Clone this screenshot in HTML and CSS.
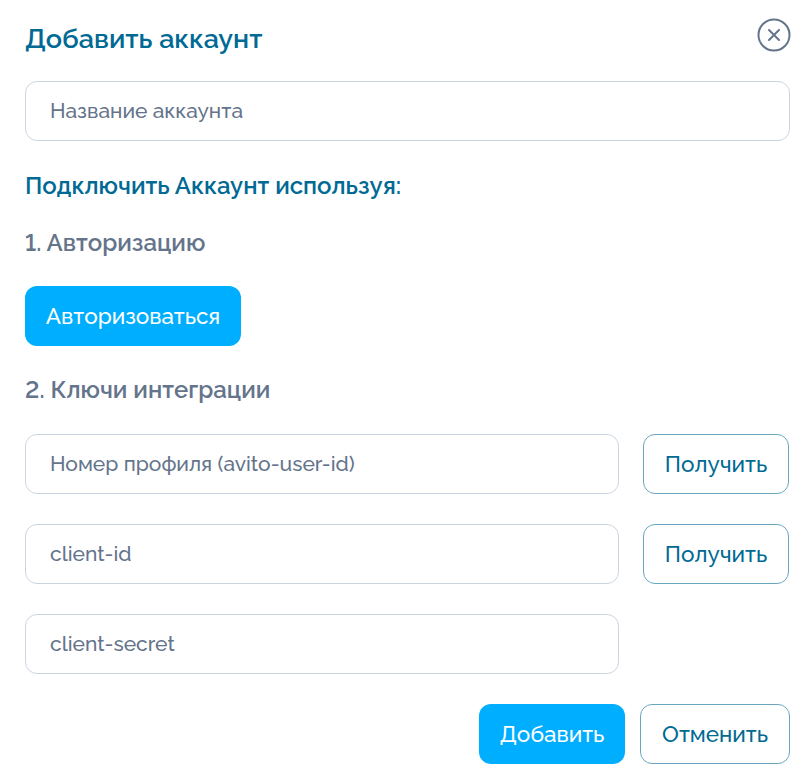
FILE: index.html
```html
<!DOCTYPE html>
<html lang="ru">
<head>
    <meta charset="UTF-8">
    <meta name="viewport" content="width=device-width, initial-scale=1.0">
    <title>Добавить аккаунт</title>
    <link rel="stylesheet" href="styles.css">
</head>
<body>
    <div class="modal">
        <div class="modal-head">
            <h1>Добавить аккаунт</h1>
            <button class="close" aria-label="Закрыть">
                <svg width="34" height="34" viewBox="0 0 34 34" fill="none" stroke="#64748b">
                    <circle cx="17" cy="17" r="15.5" stroke-width="2"/>
                    <path d="M12 12l10 10M22 12l-10 10" stroke-width="2" stroke-linecap="round"/>
                </svg>
            </button>
        </div>
        <input class="field" type="text" placeholder="Название аккаунта">
        <h2>Подключить Аккаунт используя:</h2>
        <h3>1. Авторизацию</h3>
        <div><button class="btn primary wide">Авторизоваться</button></div>
        <h3 class="keys">2. Ключи интеграции</h3>
        <div class="row">
            <input class="field" type="text" placeholder="Номер профиля (avito-user-id)">
            <button class="btn outline">Получить</button>
        </div>
        <div class="row">
            <input class="field" type="text" placeholder="client-id">
            <button class="btn outline">Получить</button>
        </div>
        <div class="row">
            <input class="field" type="text" placeholder="client-secret">
            <div class="spacer"></div>
        </div>
        <div class="actions">
            <button class="btn primary">Добавить</button>
            <button class="btn outline">Отменить</button>
        </div>
    </div>
</body>
</html>
```

FILE: styles.css
```css
body {
    margin: 0;
    background: #fff;
    font-family: Raleway, "Open Sans", "Noto Sans", sans-serif;
    font-variant-numeric: lining-nums;
}
.modal {
    width: 765px;
    padding: 18px 21px 18px 25px;
    display: flex;
    flex-direction: column;
}
.modal-head {
    display: flex;
    justify-content: space-between;
    align-items: center;
    height: 40px;
    margin-bottom: 23px;
}
h1 {
    margin: 0;
    font-size: 27px;
    font-weight: 600;
    color: #006a94;
}
.close {
    padding: 0;
    border: none;
    background: none;
    display: flex;
    margin-right: -1px;
    margin-top: -7px;
}
h2 {
    margin: 30px 0 0;
    font-size: 24px;
    line-height: 30px;
    font-weight: 600;
    color: #006a94;
}
h3 {
    margin: 27px 0 0;
    font-size: 24px;
    line-height: 30px;
    font-weight: 600;
    color: #64748b;
}
h3.keys {
    margin: 29px 0 29px;
}
.field {
    box-sizing: border-box;
    width: 100%;
    height: 60px;
    padding: 0 24px 2px;
    border: 1px solid #cbd5e1;
    border-radius: 12px;
    font-family: inherit;
    font-size: 21px;
    font-weight: 500;
    outline: none;
}
.field::placeholder {
    color: #64748b;
    opacity: 1;
}
.btn {
    box-sizing: border-box;
    height: 60px;
    width: 146px;
    padding: 0 0 1px;
    border-radius: 12px;
    font-family: inherit;
    font-size: 22.5px;
    font-weight: 500;
    white-space: nowrap;
}
.primary {
    margin-top: 28px;
    border: none;
    background: #00aeff;
    color: #fff;
}
.wide {
    width: 216px;
}
.outline {
    border: 1px solid #6ba6bf;
    background: #fff;
    color: #006a94;
}
.row {
    display: flex;
    gap: 24px;
    margin-bottom: 30px;
    padding-right: 1px;
}
.row .field {
    flex: 1;
}
.row .btn {
    flex: none;
}
.spacer {
    width: 146px;
}
.actions {
    display: flex;
    justify-content: flex-end;
    gap: 15px;
}
.actions .outline {
    width: 150px;
}
.actions .primary {
    margin-top: 0;
}
```
